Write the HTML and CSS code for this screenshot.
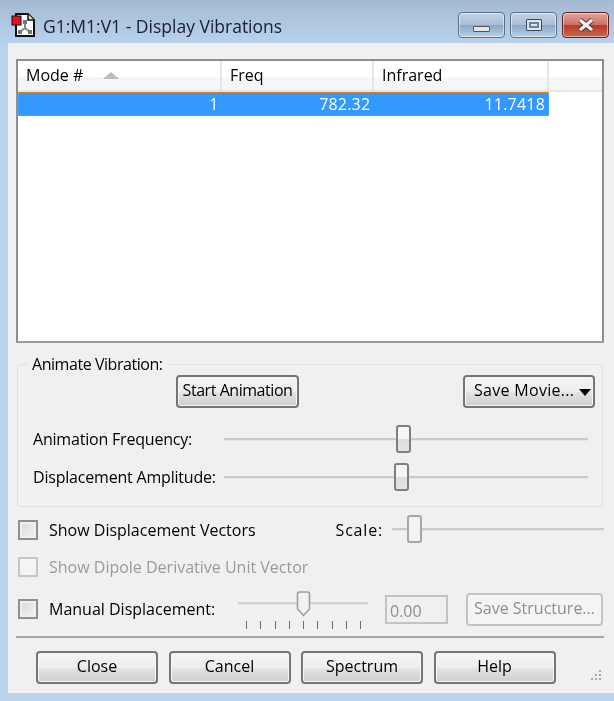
FILE: index.html
```html
<!DOCTYPE html>
<html lang="en">
<head>
    <meta charset="UTF-8">
    <meta name="viewport" content="width=device-width, initial-scale=1.0">
    <title>G1:M1:V1 - Display Vibrations</title>
    <link rel="stylesheet" href="styles.css">
</head>
<body>
    <div class="titlebar">
        <svg class="app-icon" width="26" height="26" viewBox="0 0 26 26">
            <path d="M5 2h12l6 6v16H5z" fill="#fff" stroke="#111" stroke-width="2"/>
            <path d="M17 2v6h6" fill="#ddd" stroke="#111" stroke-width="1.5"/>
            <rect x="1" y="4" width="9" height="9" fill="#e8101c" stroke="#111"/>
            <path d="M14 10v6M14 16l-5 4M14 16l5 4" fill="none" stroke="#888" stroke-width="2"/>
            <rect x="12" y="8" width="4" height="4" fill="#777"/>
            <rect x="7" y="18" width="4" height="4" fill="#777"/>
            <rect x="17" y="18" width="4" height="4" fill="#777"/>
        </svg>
        <span class="title-text">G1:M1:V1 - Display Vibrations</span>
        <div class="caption-buttons">
            <div class="caption-btn"><span class="glyph-min"></span></div>
            <div class="caption-btn"><span class="glyph-max"></span></div>
            <div class="caption-btn close">
                <svg width="20" height="14" viewBox="0 0 20 14">
                    <path d="M4 2l12 10M16 2L4 12" stroke="#4a2a28" stroke-width="5"/>
                    <path d="M4 2l12 10M16 2L4 12" stroke="#f2f0ee" stroke-width="3.4"/>
                </svg>
            </div>
        </div>
    </div>

    <div class="client">
        <div class="list">
            <div class="list-head">
                <div class="col col-mode">Mode #<span class="sort-arrow"></span></div>
                <div class="col col-freq">Freq</div>
                <div class="col col-ir">Infrared</div>
                <div class="col col-rest"></div>
            </div>
            <div class="list-row">
                <div class="cell col-mode">1</div>
                <div class="cell col-freq">782.32</div>
                <div class="cell col-ir">11.7418</div>
            </div>
        </div>

        <fieldset class="group">
            <legend>Animate Vibration:</legend>
            <div class="anim-buttons">
                <button class="btn btn-start">Start Animation</button>
                <button class="btn btn-movie">Save Movie...<span class="drop-arrow"></span></button>
            </div>
            <div class="slider-row first">
                <label>Animation Frequency:</label>
                <div class="slider"><span class="thumb" style="left: 172px"></span></div>
            </div>
            <div class="slider-row">
                <label>Displacement Amplitude:</label>
                <div class="slider"><span class="thumb" style="left: 170px"></span></div>
            </div>
        </fieldset>

        <div class="option-row vectors">
            <span class="check"></span>
            <span class="option-label">Show Displacement Vectors</span>
            <span class="scale-label">Scale:</span>
            <div class="slider scale"><span class="thumb" style="left: 15px"></span></div>
        </div>
        <div class="option-row dipole disabled">
            <span class="check"></span>
            <span class="option-label">Show Dipole Derivative Unit Vector</span>
        </div>
        <div class="option-row manual">
            <span class="check"></span>
            <span class="option-label manual-label">Manual Displacement:</span>
            <div class="tick-slider">
                <div class="slider small">
                    <svg class="pointer" width="15" height="26" viewBox="0 0 15 26">
                        <path d="M1.5 3q0-2 2-2h8q2 0 2 2v15l-6 6.5-6-6.5z" fill="#f2f2f2" stroke="#9a9a9a" stroke-width="1.5"/>
                    </svg>
                </div>
                <div class="ticks">
                    <i></i><i></i><i></i><i></i><i></i><i></i><i></i><i></i><i></i>
                </div>
            </div>
            <div class="value-box">0.00</div>
            <button class="btn btn-structure" disabled>Save Structure...</button>
        </div>

        <div class="separator"></div>

        <div class="footer">
            <button class="btn">Close</button>
            <button class="btn">Cancel</button>
            <button class="btn">Spectrum</button>
            <button class="btn">Help</button>
            <svg class="grip" width="12" height="14" viewBox="0 0 12 14">
                <g fill="#a8a8a8">
                    <rect x="9" y="1" width="2" height="2"/>
                    <rect x="9" y="5" width="2" height="2"/>
                    <rect x="5" y="5" width="2" height="2"/>
                    <rect x="9" y="9" width="2" height="2"/>
                    <rect x="5" y="9" width="2" height="2"/>
                    <rect x="1" y="9" width="2" height="2"/>
                </g>
            </svg>
        </div>
    </div>
</body>
</html>
```

FILE: styles.css
```css
/* Window frame */
* {
    box-sizing: border-box;
}

html, body {
    margin: 0;
    padding: 0;
}

body {
    width: 614px;
    height: 701px;
    overflow: hidden;
    background: linear-gradient(to bottom, #a4bad2, #b9d3ec 45px);
    font-family: "Open Sans", "Noto Sans", sans-serif;
    font-size: 16px;
    color: #000;
}

/* the screenshot was scaled up, so everything is a little soft */
.titlebar, .client {
    filter: blur(0.3px);
}

/* Title bar */
.titlebar {
    height: 43px;
    display: flex;
    align-items: flex-start;
    padding: 12px 5px 0 11px;
}

.title-text {
    margin: 2px 0 0 6px;
    color: #1b1b33;
    font-size: 17.5px;
}

.caption-buttons {
    margin-left: auto;
    display: flex;
    gap: 5px;
}

.caption-btn {
    width: 47px;
    height: 26px;
    border: 1px solid #5b6f88;
    border-radius: 4px;
    box-shadow: inset 0 0 0 1px rgba(255, 255, 255, 0.5);
    background: linear-gradient(to bottom, #c4d3e4, #a9bdd4 50%, #8ea7c4 52%, #b8cee6);
    display: flex;
    align-items: center;
    justify-content: center;
}

.caption-btn.close {
    border-color: #5a2320;
    background: linear-gradient(to bottom, #e0a79f, #cd6f60 50%, #b53d2a 52%, #c9654f);
}

.glyph-min {
    width: 17px;
    height: 6px;
    margin-top: 7px;
    background: #e4e7ea;
    border: 1px solid #4a566a;
    border-radius: 1px;
}

.glyph-max {
    width: 16px;
    height: 12px;
    background: #dfe5ec;
    border: 1px solid #39475c;
    border-radius: 1px;
    box-shadow: inset 0 0 0 2px #dfe5ec, inset 0 0 0 4px #6f8099;
}

/* Client area */
.client {
    height: 650px;
    margin-left: 8px;
    padding: 16px 10px 0 8px;
    background: #f0f0f0;
}

/* Mode list */
.list {
    height: 284px;
    background: #fff;
    border: 2px solid #8c8f94;
    border-bottom-color: #9a9da1;
}

.list-head {
    height: 31px;
    display: flex;
    background: linear-gradient(to bottom, #fff 55%, #f5f6f7 56%);
    border-bottom: 2px solid #e4e6e8;
}

.col {
    padding: 3px 0 0 8px;
    border-right: 2px solid #e4e6e8;
    position: relative;
}

.col-mode { width: 204px; }
.col-freq { width: 152px; }
.col-ir { width: 175px; }

.col-rest {
    flex: 1;
    border-right: none;
}

.sort-arrow {
    position: absolute;
    left: 85px;
    top: 11px;
    border-left: 8px solid transparent;
    border-right: 8px solid transparent;
    border-bottom: 7px solid #bcbcbc;
}

.list-row {
    width: 531px;
    height: 24px;
    display: flex;
    color: #fff;
    background: #3399ff;
    border: 1px dotted #e08a2a;
}

.cell {
    text-align: right;
    padding-right: 3px;
    line-height: 22px;
    letter-spacing: 0.2px;
}

.cell.col-mode { width: 203px; }

/* Animate group */
.group {
    margin: 11px 1px 0;
    padding: 0;
    height: 153px;
    border: 1px solid #d9e0e6;
    border-radius: 4px;
    letter-spacing: -0.2px;
}

.group legend {
    margin-left: 10px;
    padding: 0 4px;
    line-height: 21px;
    letter-spacing: -0.45px;
}

.anim-buttons {
    display: flex;
    justify-content: space-between;
    padding: 0 7px 0 158px;
}

.btn {
    height: 33px;
    padding: 0 0 3px;
    font-family: inherit;
    font-size: 16px;
    color: #000;
    border: 2px solid #757575;
    border-radius: 4px;
    background: linear-gradient(to bottom, #f4f4f4, #ededed 50%, #e2e2e2 55%, #cfcfcf);
    box-shadow: inset 0 0 0 1px #f6f6f6;
}

.btn-start {
    width: 123px;
    letter-spacing: -0.45px;
}

.btn-movie {
    width: 132px;
    text-align: left;
    padding-left: 9px;
    position: relative;
    letter-spacing: 0.3px;
}

.drop-arrow {
    position: absolute;
    right: 2px;
    top: 12px;
    border-left: 6px solid transparent;
    border-right: 6px solid transparent;
    border-top: 7px solid #000;
}

.slider-row {
    height: 38px;
    display: flex;
    align-items: center;
    padding-left: 15px;
}

.slider-row.first {
    margin-top: 12px;
}

.slider-row label {
    width: 191px;
}

/* Sliders */
.slider {
    position: relative;
    width: 364px;
    height: 3px;
    background: #c9cbcb;
    border-bottom: 1px solid #e6e6e6;
}

.thumb {
    position: absolute;
    top: -13px;
    width: 15px;
    height: 28px;
    border: 2px solid #7f7f7f;
    border-radius: 3px;
    background: linear-gradient(to bottom, #f6f6f6 50%, #dedede 52%, #e4e4e4);
}

/* Option rows */
.option-row {
    display: flex;
    align-items: center;
    height: 28px;
    padding-left: 2px;
}

.option-row.vectors {
    margin-top: 9px;
}

.option-row.dipole {
    margin-top: 9px;
}

.option-row.manual {
    margin-top: 11px;
    height: 34px;
}

.check {
    width: 20px;
    height: 20px;
    flex: none;
    border: 2px solid #8e8f8f;
    background: linear-gradient(135deg, #d8d8d8, #f4f4f4);
    box-shadow: inset 0 0 0 2px #f0f0f0;
}

.option-label {
    margin-left: 11px;
}

.scale-label {
    margin-left: 80px;
    letter-spacing: 0.8px;
}

.slider.scale {
    width: 212px;
    margin-left: 9px;
    margin-top: -2px;
}

.slider.scale .thumb {
    border-color: #a6a6a6;
    background: #f3f3f3;
}

.disabled .check {
    border-color: #c6c6c6;
    background: #f4f4f4;
    box-shadow: none;
}

.disabled .option-label {
    color: #9a9a9a;
}

.manual-label {
    width: 189px;
}

.tick-slider {
    width: 130px;
    height: 34px;
    padding-top: 10px;
}

.slider.small {
    width: 130px;
    background: #d2d2d2;
}

.pointer {
    position: absolute;
    left: 58px;
    top: -11px;
}

.ticks {
    display: flex;
    justify-content: space-between;
    padding: 16px 7px 0 8px;
}

.ticks i {
    width: 1px;
    height: 8px;
    background: #6d6d6d;
}

.value-box {
    width: 63px;
    height: 29px;
    margin-left: 17px;
    padding: 3px 0 0 3px;
    border: 2px solid #c3c3c3;
    color: #8f8f8f;
}

.btn-structure {
    width: 137px;
    margin-left: 18px;
    color: #8f8f8f;
    border-color: #c3c3c3;
    background: #f4f4f4;
}

/* Bottom buttons */
.separator {
    height: 2px;
    margin-top: 10px;
    background: #a5a5a5;
}

.footer {
    position: relative;
    display: flex;
    gap: 10.5px;
    padding: 13px 0 0 20px;
}

.footer .btn {
    width: 122px;
}

.grip {
    position: absolute;
    right: 2px;
    top: 31px;
}
```
